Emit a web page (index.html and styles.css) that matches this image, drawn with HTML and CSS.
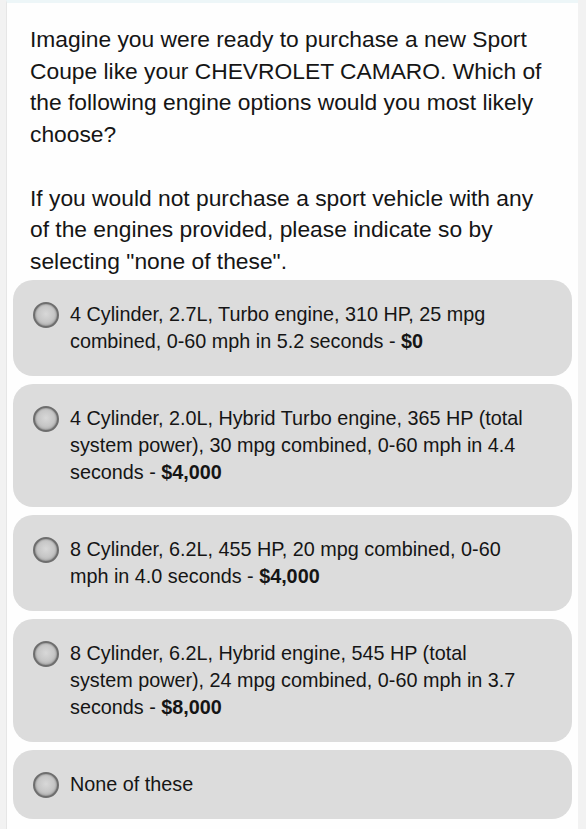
FILE: index.html
```html
<!DOCTYPE html>
<html>
<head>
<meta charset="utf-8">
<link rel="stylesheet" href="styles.css">
</head>
<body>
<div class="panel">
  <div class="question">
    <p>Imagine you were ready to purchase a new Sport Coupe like your CHEVROLET CAMARO. Which of the following engine options would you most likely choose?</p>
    <p>If you would not purchase a sport vehicle with any of the engines provided, please indicate so by selecting "none of these".</p>
  </div>
  <div class="options">
    <label class="option"><span class="radio"></span><span class="text">4 Cylinder, 2.7L, Turbo engine, 310 HP, 25 mpg combined, 0-60 mph in 5.2 seconds - <b>$0</b></span></label>
    <label class="option"><span class="radio"></span><span class="text">4 Cylinder, 2.0L, Hybrid Turbo engine, 365 HP (total system power), 30 mpg combined, 0-60 mph in 4.4 seconds - <b>$4,000</b></span></label>
    <label class="option"><span class="radio"></span><span class="text">8 Cylinder, 6.2L, 455 HP, 20 mpg combined, 0-60 mph in 4.0 seconds - <b>$4,000</b></span></label>
    <label class="option"><span class="radio"></span><span class="text">8 Cylinder, 6.2L, Hybrid engine, 545 HP (total system power), 24 mpg combined, 0-60 mph in 3.7 seconds - <b>$8,000</b></span></label>
    <label class="option"><span class="radio"></span><span class="text">None of these</span></label>
  </div>
</div>
</body>
</html>
```
FILE: styles.css
```css
html, body {
  margin: 0;
  padding: 0;
  background: #f2f2f2;
}
body {
  font-family: "Liberation Sans", Arial, sans-serif;
  color: #151515;
}
.panel {
  margin: 0 8px 0 6px;
  min-height: 829px;
  box-sizing: border-box;
  background: #fefefe;
  border-top: 3px solid #edf6f8;
  border-left: 1px solid #e6e6e6;
  padding: 21px 6px 0 6px;
}
.question {
  padding: 0 18px 0 17px;
  font-size: 22.8px;
  line-height: 31.7px;
}
.question p {
  margin: 0 0 31.7px 0;
}
.question p:last-child {
  margin-bottom: 0;
}
.options {
  margin-top: 2px;
  display: flex;
  flex-direction: column;
  gap: 8px;
}
.option {
  display: flex;
  align-items: flex-start;
  background: #dcdcdc;
  border-radius: 20px;
  padding: 21px 44px 21px 20px;
  font-size: 19.8px;
  line-height: 27px;
}
.radio {
  flex: none;
  width: 22px;
  height: 22px;
  margin-top: 1px;
  margin-right: 11px;
  border-radius: 50%;
  border: 2px solid #6e6e6e;
  background: radial-gradient(circle at 50% 45%, #d8d8d8 0%, #c6c6c6 50%, #9a9a9a 100%);
  box-shadow: inset 0 0 2px rgba(0,0,0,0.4);
}
.text b {
  font-weight: bold;
}
```
